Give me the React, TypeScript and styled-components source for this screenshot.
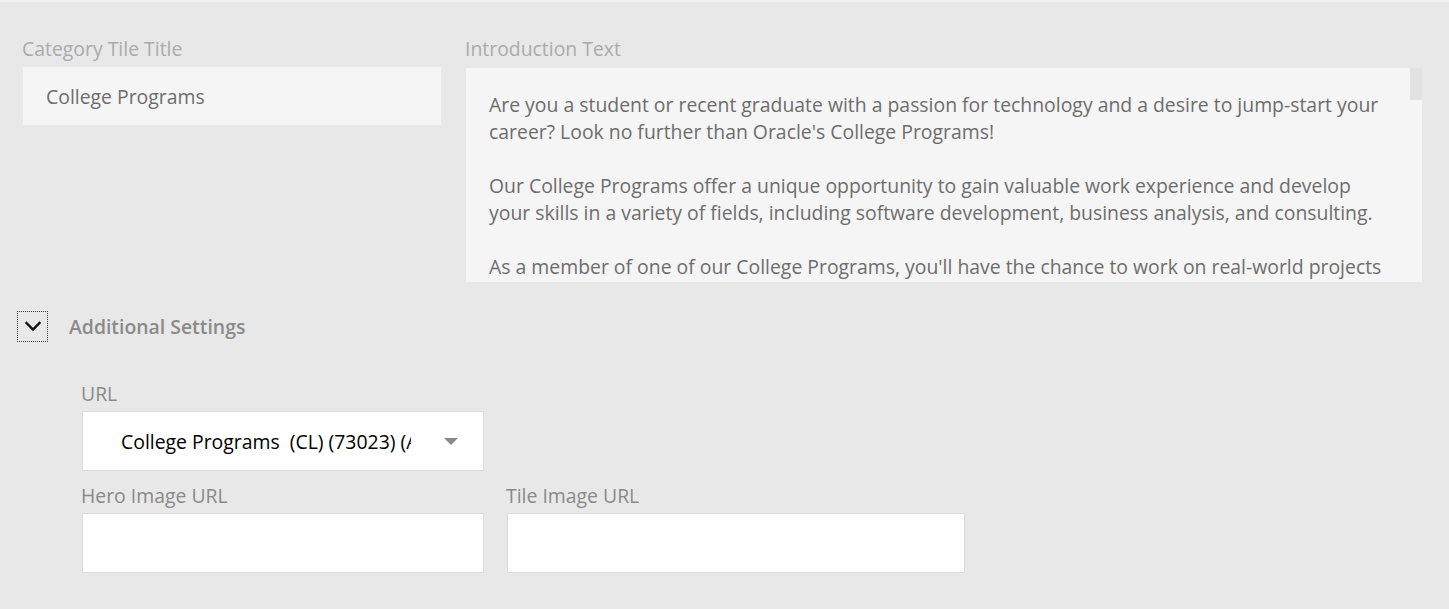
import React from 'react';
import styled, { createGlobalStyle } from 'styled-components';

const GlobalStyle = createGlobalStyle`
  body {
    margin: 0;
    background: #e8e8e8;
    font-family: "Open Sans", "Noto Sans", Arial, sans-serif;
  }
`;

const introParagraphs: string[][] = [
  [
    'Are you a student or recent graduate with a passion for technology and a desire to jump-start your',
    "career? Look no further than Oracle's College Programs!",
  ],
  [
    'Our College Programs offer a unique opportunity to gain valuable work experience and develop',
    'your skills in a variety of fields, including software development, business analysis, and consulting.',
  ],
  [
    "As a member of one of our College Programs, you'll have the chance to work on real-world projects",
    'alongside experienced professionals, and build the network you need to launch your career.',
  ],
];

const Page = styled.div`
  border-top: 2px solid #f1f1f1;
  padding: 33px 27px 36px 23px;
  font-size: 19.4px;
`;

const TopGrid = styled.div`
  display: grid;
  grid-template-columns: 418px 1fr;
  column-gap: 25px;
`;

const Field = styled.div`
  display: flex;
  flex-direction: column;
  min-width: 0;
`;

const Label = styled.label<{ $strong?: boolean }>`
  font-size: 19.4px;
  line-height: 27px;
  color: ${(p) => (p.$strong ? '#8a8a8a' : '#ababab')};
  margin-bottom: ${(p) => (p.$strong ? '4px' : '5px')};
  margin-left: -1px;
`;

const TitleInput = styled.div`
  height: 58px;
  background: #f5f5f5;
  padding: 0 23px;
  display: flex;
  align-items: center;
  font-size: 19.4px;
  color: #6d6d6d;
`;

const IntroBox = styled.div`
  position: relative;
  height: 214px;
  margin-top: 1px;
  box-sizing: border-box;
  padding: 23px 36px 0 23px;
  background: #f5f5f5;
  overflow: hidden;
  font-size: 19.4px;
  line-height: 27px;
  color: #6d6d6d;
`;

const IntroParagraph = styled.p`
  margin: 0 0 27px;
  white-space: nowrap;
`;

const ScrollThumb = styled.span`
  position: absolute;
  top: 0;
  right: 0;
  width: 12px;
  height: 32px;
  background: #e2e2e2;
`;

const SettingsHeader = styled.div`
  display: flex;
  align-items: center;
  gap: 21px;
  margin: 29px 0 0 -6px;
`;

const ToggleButton = styled.button`
  width: 31px;
  height: 31px;
  padding: 0;
  border: 1px dotted #3a3a3a;
  background: transparent;
  display: flex;
  align-items: center;
  justify-content: center;
  cursor: pointer;
`;

const SettingsTitle = styled.span`
  font-size: 19.4px;
  font-weight: 600;
  color: #8a8a8a;
  line-height: 31px;
`;

const SettingsBody = styled.div`
  padding-left: 59px;
  margin-top: 38px;
`;

const UrlField = styled(Field)`
  width: 402px;
`;

const Select = styled.div`
  height: 60px;
  box-sizing: border-box;
  background: #fff;
  border: 1px solid #dcdcdc;
  display: flex;
  align-items: center;
  gap: 33px;
  padding: 0 25px 0 38px;
  cursor: pointer;
`;

const SelectValue = styled.span`
  flex: 1;
  min-width: 0;
  overflow: hidden;
  white-space: pre;
  font-size: 19.4px;
  color: #000;
`;

const SelectArrow = styled.span`
  flex: none;
  width: 0;
  height: 0;
  border-left: 7px solid transparent;
  border-right: 7px solid transparent;
  border-top: 7px solid #8a8a8a;
  margin-top: 1px;
`;

const ImageGrid = styled.div`
  display: grid;
  grid-template-columns: 402px 458px;
  column-gap: 23px;
  margin-top: 11px;
`;

const TextInput = styled.input`
  height: 60px;
  box-sizing: border-box;
  border: 1px solid #dcdcdc;
  background: #fff;
  padding: 0 20px;
  font-family: inherit;
  font-size: 19.4px;
  outline: none;
`;

const Chevron = () => (
  <svg width="18" height="11" viewBox="0 0 18 11" fill="none">
    <path d="M2.5 2 L9 8.5 L15.5 2" stroke="#111" strokeWidth="2.4" strokeLinecap="square" />
  </svg>
);

export default function App() {
  return (
    <>
      <GlobalStyle />
      <Page>
        <TopGrid>
          <Field>
            <Label>Category Tile Title</Label>
            <TitleInput>College Programs</TitleInput>
          </Field>
          <Field>
            <Label>Introduction Text</Label>
            <IntroBox>
              {introParagraphs.map((lines, i) => (
                <IntroParagraph key={i}>
                  {lines.map((line, j) => (
                    <React.Fragment key={j}>
                      {line}
                      {j < lines.length - 1 && <br />}
                    </React.Fragment>
                  ))}
                </IntroParagraph>
              ))}
              <ScrollThumb />
            </IntroBox>
          </Field>
        </TopGrid>

        <SettingsHeader>
          <ToggleButton aria-label="Collapse additional settings">
            <Chevron />
          </ToggleButton>
          <SettingsTitle>Additional Settings</SettingsTitle>
        </SettingsHeader>

        <SettingsBody>
          <UrlField>
            <Label $strong>URL</Label>
            <Select>
              <SelectValue>College Programs  (CL) (73023) (All)</SelectValue>
              <SelectArrow />
            </Select>
          </UrlField>
          <ImageGrid>
            <Field>
              <Label $strong>Hero Image URL</Label>
              <TextInput type="text" />
            </Field>
            <Field>
              <Label $strong>Tile Image URL</Label>
              <TextInput type="text" />
            </Field>
          </ImageGrid>
        </SettingsBody>
      </Page>
    </>
  );
}
